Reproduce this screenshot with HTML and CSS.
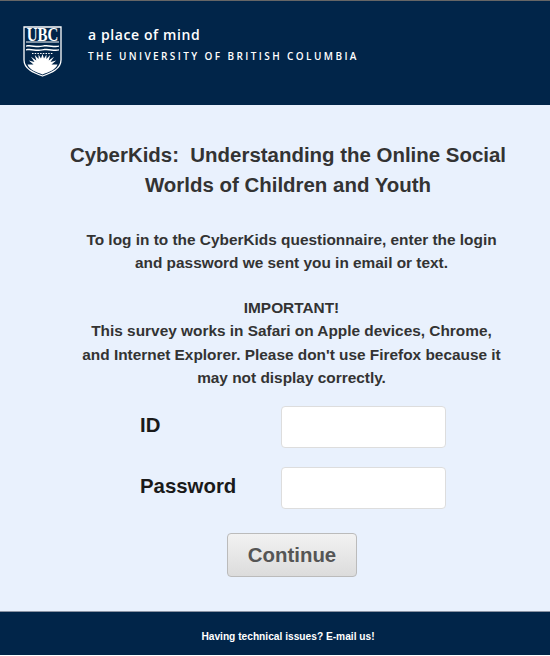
FILE: index.html
```html
<!DOCTYPE html>
<html lang="en">
<head>
    <meta charset="UTF-8">
    <meta name="viewport" content="width=device-width, initial-scale=1.0">
    <title>CyberKids Login</title>
    <link rel="stylesheet" href="styles.css">
</head>
<body>
    <div class="header">
        <svg class="crest" viewBox="0 0 39 51" width="39" height="51" aria-hidden="true">
            <path d="M1 1H38V34C38 43 28 47 19.5 50C11 47 1 43 1 34Z" fill="#012549" stroke="#fff" stroke-width="1.3"/>
            <text transform="translate(19.5 14.5) scale(1 1.2)" text-anchor="middle" class="crest-text">UBC</text>
            <path d="M3 15.6H36V16.6H3ZM3 19.4C8 18 13 20.8 19.5 19.4C26 18 31 20.8 36 19.4V20.8C31 22.2 26 19.4 19.5 20.8C13 22.2 8 19.4 3 20.8ZM3 23.2C8 21.8 13 24.6 19.5 23.2C26 21.8 31 24.6 36 23.2V24.6C31 26 26 23.2 19.5 24.6C13 26 8 23.2 3 24.6Z" fill="#fff"/>
            <path d="M9 27.5H30" stroke="#fff" stroke-width="1.2" stroke-dasharray="1.5 1.2" fill="none"/>
            <path d="M4.5 38.5L10.5 38.5L5.8 34.5L11.5 36L8 30.8L13.3 34.4L11.8 29L15.6 33L15.5 28.4L18 32.6L19.5 28L21 32.6L23.5 28.4L23.4 33L27.2 29L25.7 34.4L31 30.8L27.5 36L33.2 34.5L28.5 38.5L34.5 38.5C32.5 44 25.5 46 19.5 48.5C13.5 46 6.5 44 4.5 38.5Z" fill="#fff"/>
        </svg>
        <div class="wordmark">
            <div class="tagline">a place of mind</div>
            <div class="uni-name">THE UNIVERSITY OF BRITISH COLUMBIA</div>
        </div>
    </div>

    <div class="content">
        <h1>CyberKids:&nbsp; Understanding the Online Social Worlds of Children and Youth</h1>
        <p class="intro">To log in to the CyberKids questionnaire, enter the login and password we sent you in email or text.</p>
        <p class="notice">IMPORTANT!<br>This survey works in Safari on Apple devices, Chrome, and Internet Explorer. Please don't use Firefox because it may not display correctly.</p>

        <form class="login-form">
            <div class="form-row">
                <label for="login-id">ID</label>
                <input type="text" id="login-id">
            </div>
            <div class="form-row">
                <label for="login-password">Password</label>
                <input type="password" id="login-password">
            </div>
            <button type="button" class="continue-btn">Continue</button>
        </form>
    </div>

    <div class="footer">
        <a href="#">Having technical issues? E-mail us!</a>
    </div>
</body>
</html>
```

FILE: styles.css
```css
* {
    box-sizing: border-box;
    margin: 0;
    padding: 0;
}
body {
    width: 550px;
    height: 656px;
    background: #fff;
    font-family: "Liberation Sans", Arial, sans-serif;
    color: #333;
    display: flex;
    flex-direction: column;
}
.header {
    height: 105px;
    flex: none;
    background: #012549;
    border-top: 1px solid #666;
    display: flex;
    align-items: flex-start;
    padding: 25px 0 0 23px;
    gap: 26px;
}
.crest {
    flex: none;
    overflow: visible;
}
.crest-text {
    font-family: "Liberation Serif", serif;
    font-size: 15px;
    font-weight: bold;
    fill: #fff;
}
.wordmark {
    color: #fff;
    font-family: "Open Sans", sans-serif;
    margin-top: -1px;
}
.tagline {
    font-size: 14px;
    font-weight: 600;
    letter-spacing: 0.6px;
    line-height: 20px;
}
.uni-name {
    font-size: 10px;
    font-weight: 600;
    letter-spacing: 2.4px;
    line-height: 18px;
    margin-top: 2px;
}
.content {
    flex: 1;
    background: #e9f1fd;
    padding: 35px 0 0 26px;
    text-align: center;
    font-weight: bold;
}
h1 {
    font-size: 20.45px;
    line-height: 30px;
    width: 460px;
    margin: 0 auto;
}
.intro {
    font-size: 15.4px;
    line-height: 23.4px;
    margin: 28px 0 0 53px;
    width: 425px;
}
.notice {
    font-size: 15.4px;
    line-height: 23.4px;
    margin: 21px 0 0 53px;
    width: 425px;
}
.login-form {
    margin-top: 17px;
}
.form-row {
    display: flex;
    align-items: center;
    margin-bottom: 19px;
    padding-left: 114px;
    text-align: left;
}
.form-row label {
    width: 141px;
    font-size: 20.4px;
    color: #1a1a1a;
    position: relative;
    top: -2px;
}
.form-row input {
    width: 165px;
    height: 42px;
    background: #fff;
    border: 1px solid #ddd;
    border-radius: 4px;
}
.continue-btn {
    display: block;
    width: 130px;
    height: 44px;
    margin: 24px 0 0 201px;
    border: 1px solid #bbb;
    border-radius: 4px;
    background: linear-gradient(#f2f2f2, #dcdcdc);
    font-family: inherit;
    font-size: 20.4px;
    font-weight: bold;
    color: #555;
}
.footer {
    height: 44px;
    flex: none;
    margin-bottom: 1px;
    background: #012549;
    border-top: 1px solid #8a93a3;
    display: flex;
    justify-content: center;
    align-items: center;
    padding: 6px 0 0 26px;
}
.footer a {
    color: #fff;
    font-size: 10.2px;
    font-weight: bold;
    text-decoration: none;
}
```
